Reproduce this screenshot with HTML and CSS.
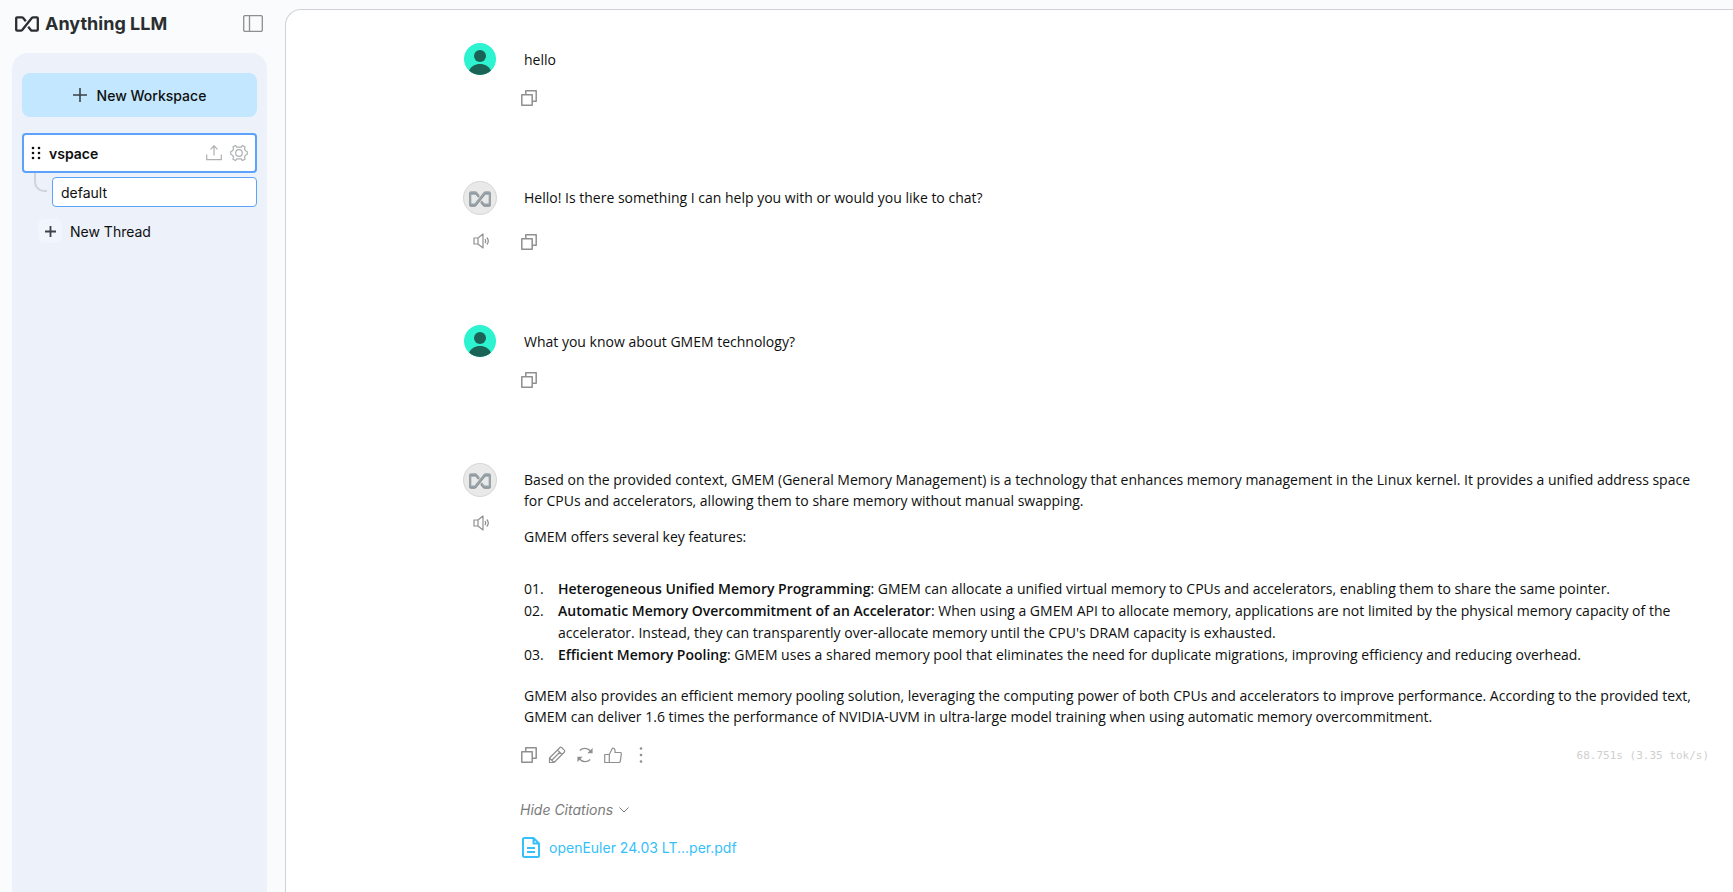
FILE: index.html
```html
<!DOCTYPE html>
<html lang="en">
<head>
  <meta charset="UTF-8" />
  <meta name="viewport" content="width=device-width, initial-scale=1.0"/>
  <title>Anything LLM</title>
  <link rel="stylesheet" href="styles.css">
</head>
<body>
  <!-- Shared icons -->
  <svg class="sprite" aria-hidden="true">
    <symbol id="logo" viewBox="0 0 24 16">
      <path d="M10.800 5.200L8 1.800Q7.600 1.300 6.800 1.300H2.200Q1.200 1.300 1.200 2.300V13.700Q1.200 14.700 2.200 14.700H5.800Q6.600 14.700 7.200 14L16.800 2Q17.400 1.300 18.200 1.300H21.800Q22.800 1.300 22.800 2.300V13.700Q22.800 14.700 21.800 14.700H17.200Q16.400 14.700 16 14.200L13.200 10.800" fill="none" stroke="currentColor" stroke-width="2.300"/>
    </symbol>
    <symbol id="copy" viewBox="0 0 16 16">
      <path d="M.8 4.800h10.400v10.400H.8zM4.800 4.800V.8h10.400v10.400h-4" fill="none" stroke="currentColor" stroke-width="1.500" stroke-linejoin="round"/>
    </symbol>
    <symbol id="speaker" viewBox="0 0 18 16">
      <path d="M3 5h4v6H3zM7 5l5-4v14l-5-4M14 6q1.300 2 0 4M15.800 4.500q3 3.500 0 7" fill="none" stroke="currentColor" stroke-width="1.200" stroke-linejoin="round"/>
    </symbol>
    <symbol id="user" viewBox="0 0 32 32">
      <circle cx="16" cy="16" r="16" fill="#2df3d0"/>
      <circle cx="16" cy="13" r="6" fill="#1b6257"/>
      <path d="M5 27.600C7 23.500 11 21 16 21s9 2.500 11 6.600A16 16 0 0 1 5 27.600z" fill="#1b6257"/>
    </symbol>
  </svg>

  <div class="app">
    <aside class="sidebar">
      <header class="brand">
        <svg class="brand-mark"><use href="#logo"/></svg>
        <span class="brand-name">Anything LLM</span>
        <button class="icon-btn toggle" aria-label="Toggle sidebar">
          <svg width="20" height="17" viewBox="0 0 20 17"><path d="M1.500.7h17l.8.8v14l-.8.8h-17l-.8-.8v-14zM6.500 1v15" fill="none" stroke="currentColor" stroke-width="1.300"/></svg>
        </button>
      </header>

      <nav class="panel">
        <button class="new-workspace">
          <svg width="14" height="14" viewBox="0 0 14 14"><path d="M7 0v14M0 7h14" stroke="currentColor" stroke-width="1.600"/></svg>
          New Workspace
        </button>

        <div class="workspace">
          <svg class="grip" width="10" height="14" viewBox="0 0 10 14"><g fill="currentColor"><circle cx="2" cy="2" r="1.300"/><circle cx="8" cy="2" r="1.300"/><circle cx="2" cy="7" r="1.300"/><circle cx="8" cy="7" r="1.300"/><circle cx="2" cy="12" r="1.300"/><circle cx="8" cy="12" r="1.300"/></g></svg>
          <a class="workspace-name" href="#">vspace</a>
          <button class="icon-btn light" aria-label="Upload">
            <svg width="16" height="16" viewBox="0 0 16 16"><path d="M.7 9.500v5.200h14.600V9.500M8 10.500V1M4.500 4.300L8 .8l3.500 3.500" fill="none" stroke="currentColor" stroke-width="1.200"/></svg>
          </button>
          <button class="icon-btn light" aria-label="Settings">
            <svg width="18" height="18" viewBox="0 0 18 18"><g fill="none" stroke="currentColor" stroke-width="1.200" stroke-linejoin="round"><circle cx="9" cy="9" r="3.300"/><path d="M6.800 3.200L5.500 1.400 3 2.800l.5 2.300-1 1.700L.7 7.700v2.600l1.800.9 1 1.700L3 15.200l2.500 1.400 1.300-1.800h4.400l1.300 1.800 2.500-1.400-.5-2.300 1-1.700 1.800-.9V7.700l-1.800-.9-1-1.700.5-2.300-2.500-1.400-1.300 1.800z"/></g></svg>
          </button>
        </div>

        <div class="thread-row">
          <span class="branch"></span>
          <a class="thread" href="#">default</a>
        </div>

        <button class="new-thread">
          <span class="plus"><svg width="11" height="11" viewBox="0 0 11 11"><path d="M5.500 0v11M0 5.500h11" stroke="currentColor" stroke-width="1.800"/></svg></span>
          New Thread
        </button>
      </nav>
    </aside>

    <main class="chat">
      <article class="message">
        <div class="side"><svg class="avatar"><use href="#user"/></svg></div>
        <div class="body">
          <div class="text"><p>hello</p></div>
          <div class="actions">
            <button class="icon-btn" aria-label="Copy"><svg width="16" height="16"><use href="#copy"/></svg></button>
          </div>
        </div>
      </article>

      <article class="message assistant">
        <div class="side">
          <span class="avatar bot"><svg width="22" height="15"><use href="#logo"/></svg></span>
          <button class="icon-btn" aria-label="Speak"><svg width="18" height="16"><use href="#speaker"/></svg></button>
        </div>
        <div class="body">
          <div class="text"><p>Hello! Is there something I can help you with or would you like to chat?</p></div>
          <div class="actions">
            <button class="icon-btn" aria-label="Copy"><svg width="16" height="16"><use href="#copy"/></svg></button>
          </div>
        </div>
      </article>

      <article class="message">
        <div class="side"><svg class="avatar"><use href="#user"/></svg></div>
        <div class="body">
          <div class="text"><p>What you know about GMEM technology?</p></div>
          <div class="actions">
            <button class="icon-btn" aria-label="Copy"><svg width="16" height="16"><use href="#copy"/></svg></button>
          </div>
        </div>
      </article>

      <article class="message assistant">
        <div class="side">
          <span class="avatar bot"><svg width="22" height="15"><use href="#logo"/></svg></span>
          <button class="icon-btn" aria-label="Speak"><svg width="18" height="16"><use href="#speaker"/></svg></button>
        </div>
        <div class="body">
          <div class="text">
            <p>Based on the provided context, GMEM (General Memory Management) is a technology that enhances memory management in the Linux kernel. It provides a unified address space for CPUs and accelerators, allowing them to share memory without manual swapping.</p>
            <p>GMEM offers several key features:</p>
            <ol>
              <li><strong>Heterogeneous Unified Memory Programming</strong>: GMEM can allocate a unified virtual memory to CPUs and accelerators, enabling them to share the same pointer.</li>
              <li><strong>Automatic Memory Overcommitment of an Accelerator</strong>: When using a GMEM API to allocate memory, applications are not limited by the physical memory capacity of the accelerator. Instead, they can transparently over-allocate memory until the CPU's DRAM capacity is exhausted.</li>
              <li><strong>Efficient Memory Pooling</strong>: GMEM uses a shared memory pool that eliminates the need for duplicate migrations, improving efficiency and reducing overhead.</li>
            </ol>
            <p>GMEM also provides an efficient memory pooling solution, leveraging the computing power of both CPUs and accelerators to improve performance. According to the provided text, GMEM can deliver 1.6 times the performance of NVIDIA-UVM in ultra-large model training when using automatic memory overcommitment.</p>
          </div>
          <div class="actions">
            <button class="icon-btn" aria-label="Copy"><svg width="16" height="16"><use href="#copy"/></svg></button>
            <button class="icon-btn" aria-label="Edit">
              <svg width="18" height="18" viewBox="0 0 18 18"><path d="M1.500 16.500V12L12 1.500q.8-.6 1.600 0L16.500 4.400q.6.800 0 1.600L6 16.500zM9.500 4l4.500 4.500M1.500 12L6 16.500M4 14L12 6" fill="none" stroke="currentColor" stroke-width="1.200" stroke-linejoin="round"/></svg>
            </button>
            <button class="icon-btn" aria-label="Regenerate">
              <svg width="16" height="16" viewBox="0 0 16 16"><path d="M2.800 3.500C5.500.5 10.500.5 13.500 4M2.500 12c3 3.500 8 3.500 10.700.5" fill="none" stroke="currentColor" stroke-width="1.200"/><path d="M15.600 1v5.300h-5.300zM.4 15V9.700h5.300z" fill="currentColor"/></svg>
            </button>
            <button class="icon-btn" aria-label="Good response">
              <svg width="18" height="17" viewBox="0 0 18 17"><path d="M.7 7.500h4.600v8H.7zM5.300 7.500L8.500 1q2.500 0 2.500 2.500V5.500h5.300q1.200.1 1 1.300l-1 7.500q-.2 1.200-1.400 1.200H5.300" fill="none" stroke="currentColor" stroke-width="1.200" stroke-linejoin="round"/></svg>
            </button>
            <button class="icon-btn" aria-label="More">
              <svg width="16" height="16" viewBox="0 0 16 16"><g fill="currentColor"><circle cx="8" cy="1.500" r="1.300"/><circle cx="8" cy="8" r="1.300"/><circle cx="8" cy="14.500" r="1.300"/></g></svg>
            </button>
            <span class="metrics">68.751s (3.35 tok/s)</span>
          </div>
          <div class="citations">
            <button class="citations-toggle">
              Hide Citations
              <svg width="10" height="6" viewBox="0 0 10 6"><path d="M.5.5L5 5 9.500.5" fill="none" stroke="currentColor"/></svg>
            </button>
            <a class="citation" href="#">
              <svg width="18" height="21" viewBox="0 0 18 21"><path d="M2.500 1h9L17 6.500v12q0 1.500-1.500 1.500h-13Q1 20 1 18.500v-16Q1 1 2.500 1zM11.500 1v5.500H17M5 11h8M5 15h8" fill="none" stroke="currentColor" stroke-width="2" stroke-linejoin="round"/></svg>
              openEuler 24.03 LT...per.pdf
            </a>
          </div>
        </div>
      </article>
    </main>
  </div>
</body>
</html>
```
FILE: styles.css
```css
* {
  margin: 0;
  padding: 0;
  box-sizing: border-box;
}
body {
  font-family: Inter, 'Liberation Sans', sans-serif;
  font-size: 14px;
  line-height: 21px;
  background: #f9fbfd;
  color: #0e0f0f;
}
svg {
  display: block;
  flex-shrink: 0;
}
a {
  color: inherit;
  text-decoration: none;
}
button {
  font: inherit;
  color: inherit;
  background: none;
  border: none;
  cursor: pointer;
}
.sprite {
  position: absolute;
  width: 0;
  height: 0;
}
.icon-btn {
  color: #8f8f8f;
}
.icon-btn.light {
  color: #adb0b3;
}
.app {
  display: flex;
  height: 100vh;
  overflow: hidden;
}

/* Sidebar */
.sidebar {
  display: flex;
  flex-direction: column;
  width: 267px;
  flex-shrink: 0;
  padding-left: 12px;
}
.brand {
  display: flex;
  align-items: center;
  height: 53px;
  padding: 0 4px 6px 3px;
  color: #2a2e30;
}
.brand-mark {
  width: 24px;
  height: 16px;
}
.brand-name {
  margin-left: 6px;
  font-size: 18px;
  font-weight: 700;
}
.toggle {
  margin-left: auto;
}
.panel {
  flex: 1;
  padding: 20px 10px;
  background: #ecf1fa;
  border-radius: 16px 16px 0 0;
}
.new-workspace {
  display: flex;
  align-items: center;
  justify-content: center;
  gap: 10px;
  width: 100%;
  height: 44px;
  margin-bottom: 16px;
  background: #c3e7fe;
  border-radius: 8px;
  font-weight: 500;
}
.new-workspace svg,
.plus svg {
  color: #3c4248;
}
.workspace {
  display: flex;
  align-items: center;
  gap: 8px;
  height: 40px;
  padding: 0 7px;
  background: #fff;
  border: 2px solid #5ca2fa;
  border-radius: 4px;
}
.workspace-name {
  flex: 1;
  font-weight: 600;
}
.thread-row {
  display: flex;
  margin-bottom: 12px;
}
.branch {
  width: 13px;
  height: 19px;
  margin: 0 5px 0 12px;
  border: solid #d0d3d8;
  border-width: 0 0 2px 2px;
  border-bottom-left-radius: 10px;
}
.thread {
  flex: 1;
  height: 30px;
  margin-top: 4px;
  padding: 4px 8px;
  background: #fff;
  border: 1px solid #5ca2fa;
  border-radius: 4px;
}
.new-thread {
  display: flex;
  align-items: center;
  gap: 8px;
  padding-left: 16px;
}
.plus {
  display: flex;
  align-items: center;
  justify-content: center;
  width: 24px;
  height: 24px;
  background: #f1f5fc;
  border-radius: 6px;
}

/* Chat */
.chat {
  flex: 1;
  margin: 9px 0 0 18px;
  padding: 33px 24px 0 177px;
  background: #fff;
  border: solid #cfd1d4;
  border-width: 1px 0 0 1px;
  border-top-left-radius: 16px;
}
.message {
  display: flex;
  gap: 27px;
  padding-bottom: 75px;
}
.side {
  display: flex;
  flex-direction: column;
  align-items: center;
  gap: 18px;
  width: 34px;
  flex-shrink: 0;
}
.avatar {
  width: 32px;
  height: 32px;
}
.bot {
  display: flex;
  align-items: center;
  justify-content: center;
  width: 34px;
  height: 34px;
  background: #e9e9e9;
  border: 1px solid #d6d6d6;
  border-radius: 50%;
  color: #98a3a9;
}
.bot svg {
  filter: drop-shadow(0 1px 0 #80888c);
}
.body {
  flex: 1;
  padding-top: 6px;
}
.text {
  font-family: 'Open Sans', 'Noto Sans', sans-serif;
}
.assistant .text {
  min-height: 27px;
}
.text p + p {
  margin-top: 15px;
}
.text ol {
  margin: 31px 0 19px;
  list-style: none;
  counter-reset: item;
  line-height: 22px;
}
.text li {
  padding-left: 34px;
  counter-increment: item;
}
.text li::before {
  content: counter(item, decimal-leading-zero) ".";
  display: inline-block;
  width: 34px;
  margin-left: -34px;
}
.text strong {
  font-weight: 600;
}
.actions {
  display: flex;
  align-items: center;
  gap: 11px;
  height: 16px;
  margin: 20px 0 0 -3px;
}
.metrics {
  margin-left: auto;
  font-family: 'DejaVu Sans Mono', 'Liberation Mono', monospace;
  font-size: 11px;
  color: #cfcfcf;
}
.citations {
  display: flex;
  flex-direction: column;
  align-items: flex-start;
  gap: 17px;
  margin: 36px 0 0 -4px;
}
.citations-toggle {
  display: flex;
  align-items: center;
  gap: 6px;
  font-style: italic;
  color: #7b7b7b;
}
.citation {
  display: flex;
  align-items: center;
  gap: 9px;
  padding-left: 2px;
  color: #36bffa;
}
```
